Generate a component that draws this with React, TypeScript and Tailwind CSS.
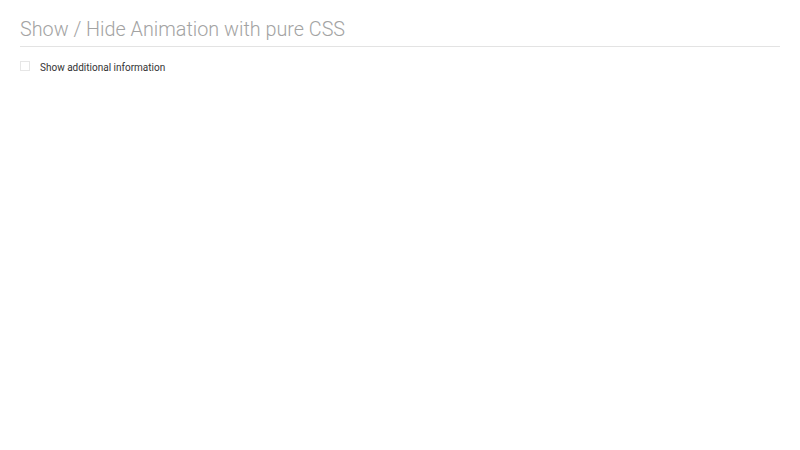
export default function App() {
  return (
    <div className="w-[800px] h-[450px] bg-white px-5 pt-[16px]" style={{ fontFamily: "Roboto, 'Liberation Sans', sans-serif" }}>
      <h1 className="text-[19.8px] font-light text-[#a3a3a3] leading-[28px] pb-[2px] border-b border-[#e3e3e3]">
        Show / Hide Animation with pure CSS
      </h1>
      <label className="flex items-center mt-[13px] h-[14px]">
        <span className="w-[10px] h-[10px] border border-[#e6e6e6] bg-white mr-[10px] -translate-y-[1px]" />
        <span className="text-[10px] text-[#333]">Show additional information</span>
      </label>
    </div>
  );
}
